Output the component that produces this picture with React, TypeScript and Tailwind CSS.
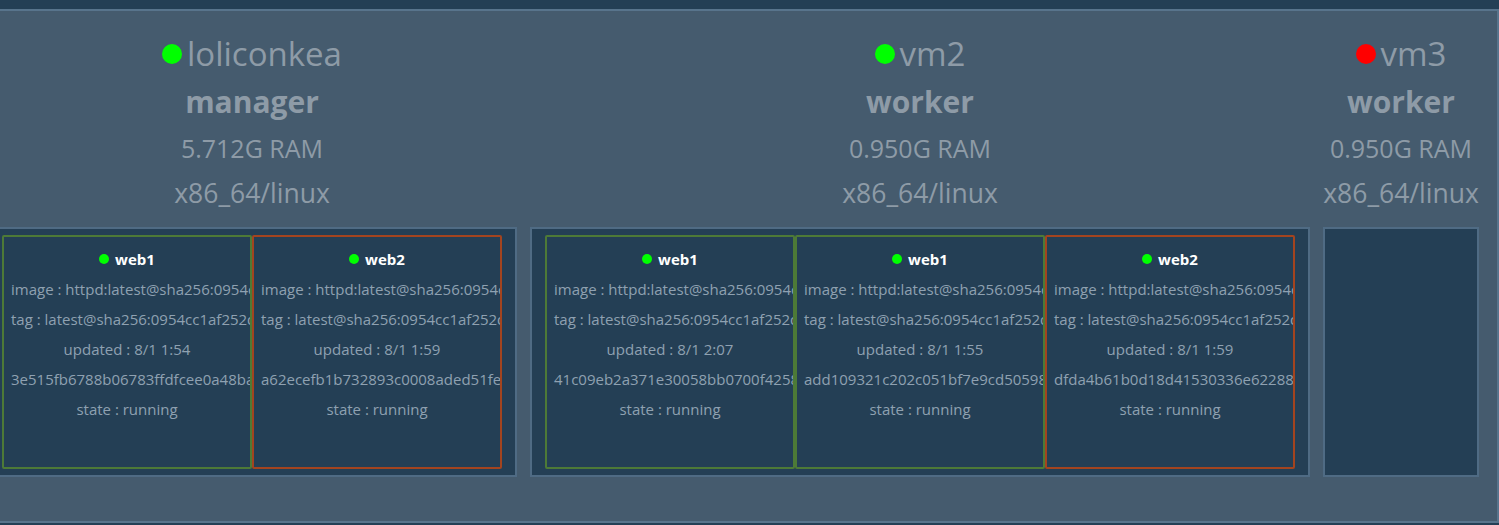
import React from "react";

type Task = {
  name: string;
  ok: boolean;
  image: string;
  tag: string;
  updated: string;
  id: string;
  state: string;
};

type Node = {
  host: string;
  up: boolean;
  role: string;
  ram: string;
  arch: string;
  tasks: Task[];
};

const IMG = "httpd:latest@sha256:0954cc1af252d824338b2f17ad7ee2e2e2ca4fe2b4bb04ac1a1c6a2f3f3e3d0d";
const TAG = "latest@sha256:0954cc1af252d824338b2f17ad7ee2e2e2ca4fe2b4bb04ac1a1c6a2f3f3e3d0d";

const nodes: Node[] = [
  {
    host: "loliconkea",
    up: true,
    role: "manager",
    ram: "5.712G RAM",
    arch: "x86_64/linux",
    tasks: [
      { name: "web1", ok: true, image: IMG, tag: TAG, updated: "8/1 1:54", id: "3e515fb6788b06783ffdfcee0a48ba4c2f1d9e7a03b5c6d8e1f2a3b4c5d6e7f8", state: "running" },
      { name: "web2", ok: false, image: IMG, tag: TAG, updated: "8/1 1:59", id: "a62ecefb1b732893c0008aded51fe7a9b3c4d5e6f7a8b9c0d1e2f3a4b5c6d7e8", state: "running" },
    ],
  },
  {
    host: "vm2",
    up: true,
    role: "worker",
    ram: "0.950G RAM",
    arch: "x86_64/linux",
    tasks: [
      { name: "web1", ok: true, image: IMG, tag: TAG, updated: "8/1 2:07", id: "41c09eb2a371e30058bb0700f42581c3d4e5f6a7b8c9d0e1f2a3b4c5d6e7f8a9", state: "running" },
      { name: "web1", ok: true, image: IMG, tag: TAG, updated: "8/1 1:55", id: "add109321c202c051bf7e9cd505984a3b2c1d0e9f8a7b6c5d4e3f2a1b0c9d8e7", state: "running" },
      { name: "web2", ok: false, image: IMG, tag: TAG, updated: "8/1 1:59", id: "dfda4b61b0d18d41530336e622889a8b7c6d5e4f3a2b1c0d9e8f7a6b5c4d3e2f", state: "running" },
    ],
  },
  {
    host: "vm3",
    up: false,
    role: "worker",
    ram: "0.950G RAM",
    arch: "x86_64/linux",
    tasks: [],
  },
];

function TaskCard({ task }: { task: Task }) {
  return (
    <div
      className={
        "w-[250px] shrink-0 overflow-hidden rounded-[2px] border-2 pt-[7px] text-center text-[15px] leading-[30px] text-[#8fa1b1] " +
        (task.ok ? "border-[#4d7a37]" : "border-[#a3441f]")
      }
    >
      {/* ===== Task Title ===== */}
      <div className="flex items-center justify-center gap-[6px] font-bold text-white">
        <span className="h-[10px] w-[10px] rounded-full bg-[#00ff00]" />
        {task.name}
      </div>
      <div className="whitespace-nowrap px-[7px]">image : {task.image}</div>
      <div className="whitespace-nowrap px-[7px]">tag : {task.tag}</div>
      <div className="whitespace-nowrap px-[7px]">updated : {task.updated}</div>
      <div className="whitespace-nowrap px-[7px]">{task.id}</div>
      <div className="whitespace-nowrap px-[7px]">state : {task.state}</div>
    </div>
  );
}

function NodeColumn({ node }: { node: Node }) {
  return (
    <div className="flex flex-col items-center text-[#8e9ba7]">
      {/* ===== Node Header ===== */}
      <div className="flex items-center gap-[5px] text-[33px] leading-[48px]">
        <span
          className={
            "h-[20px] w-[20px] rounded-full " + (node.up ? "bg-[#00ff00]" : "bg-[#ff0000]")
          }
        />
        {node.host}
      </div>
      <div className="text-[30px] font-bold leading-[48px]">{node.role}</div>
      <div className="text-[25px] leading-[45px]">{node.ram}</div>
      <div className="text-[26.5px] leading-[45px]">{node.arch}</div>

      {/* ===== Tasks Box ===== */}
      <div className="mt-[11px] flex h-[250px] w-full min-w-[156px] border-2 border-[#4f6b84] bg-[#243f55] px-[13px] py-[6px]">
        {node.tasks.map((t, i) => (
          <TaskCard key={i} task={t} />
        ))}
      </div>
    </div>
  );
}

export default function App() {
  return (
    <div
      className="h-[525px] w-[1499px] overflow-hidden bg-[#243f55] pt-[9px]"
      style={{ fontFamily: '"Open Sans", "Noto Sans", sans-serif' }}
    >
      <div className="-ml-[15px] h-[514px] w-[1514px] border-2 border-[#58748c] bg-[#455b6e] pt-[19px]">
        <div className="flex gap-[13px]">
          {nodes.map((n) => (
            <NodeColumn key={n.host} node={n} />
          ))}
        </div>
      </div>
    </div>
  );
}
